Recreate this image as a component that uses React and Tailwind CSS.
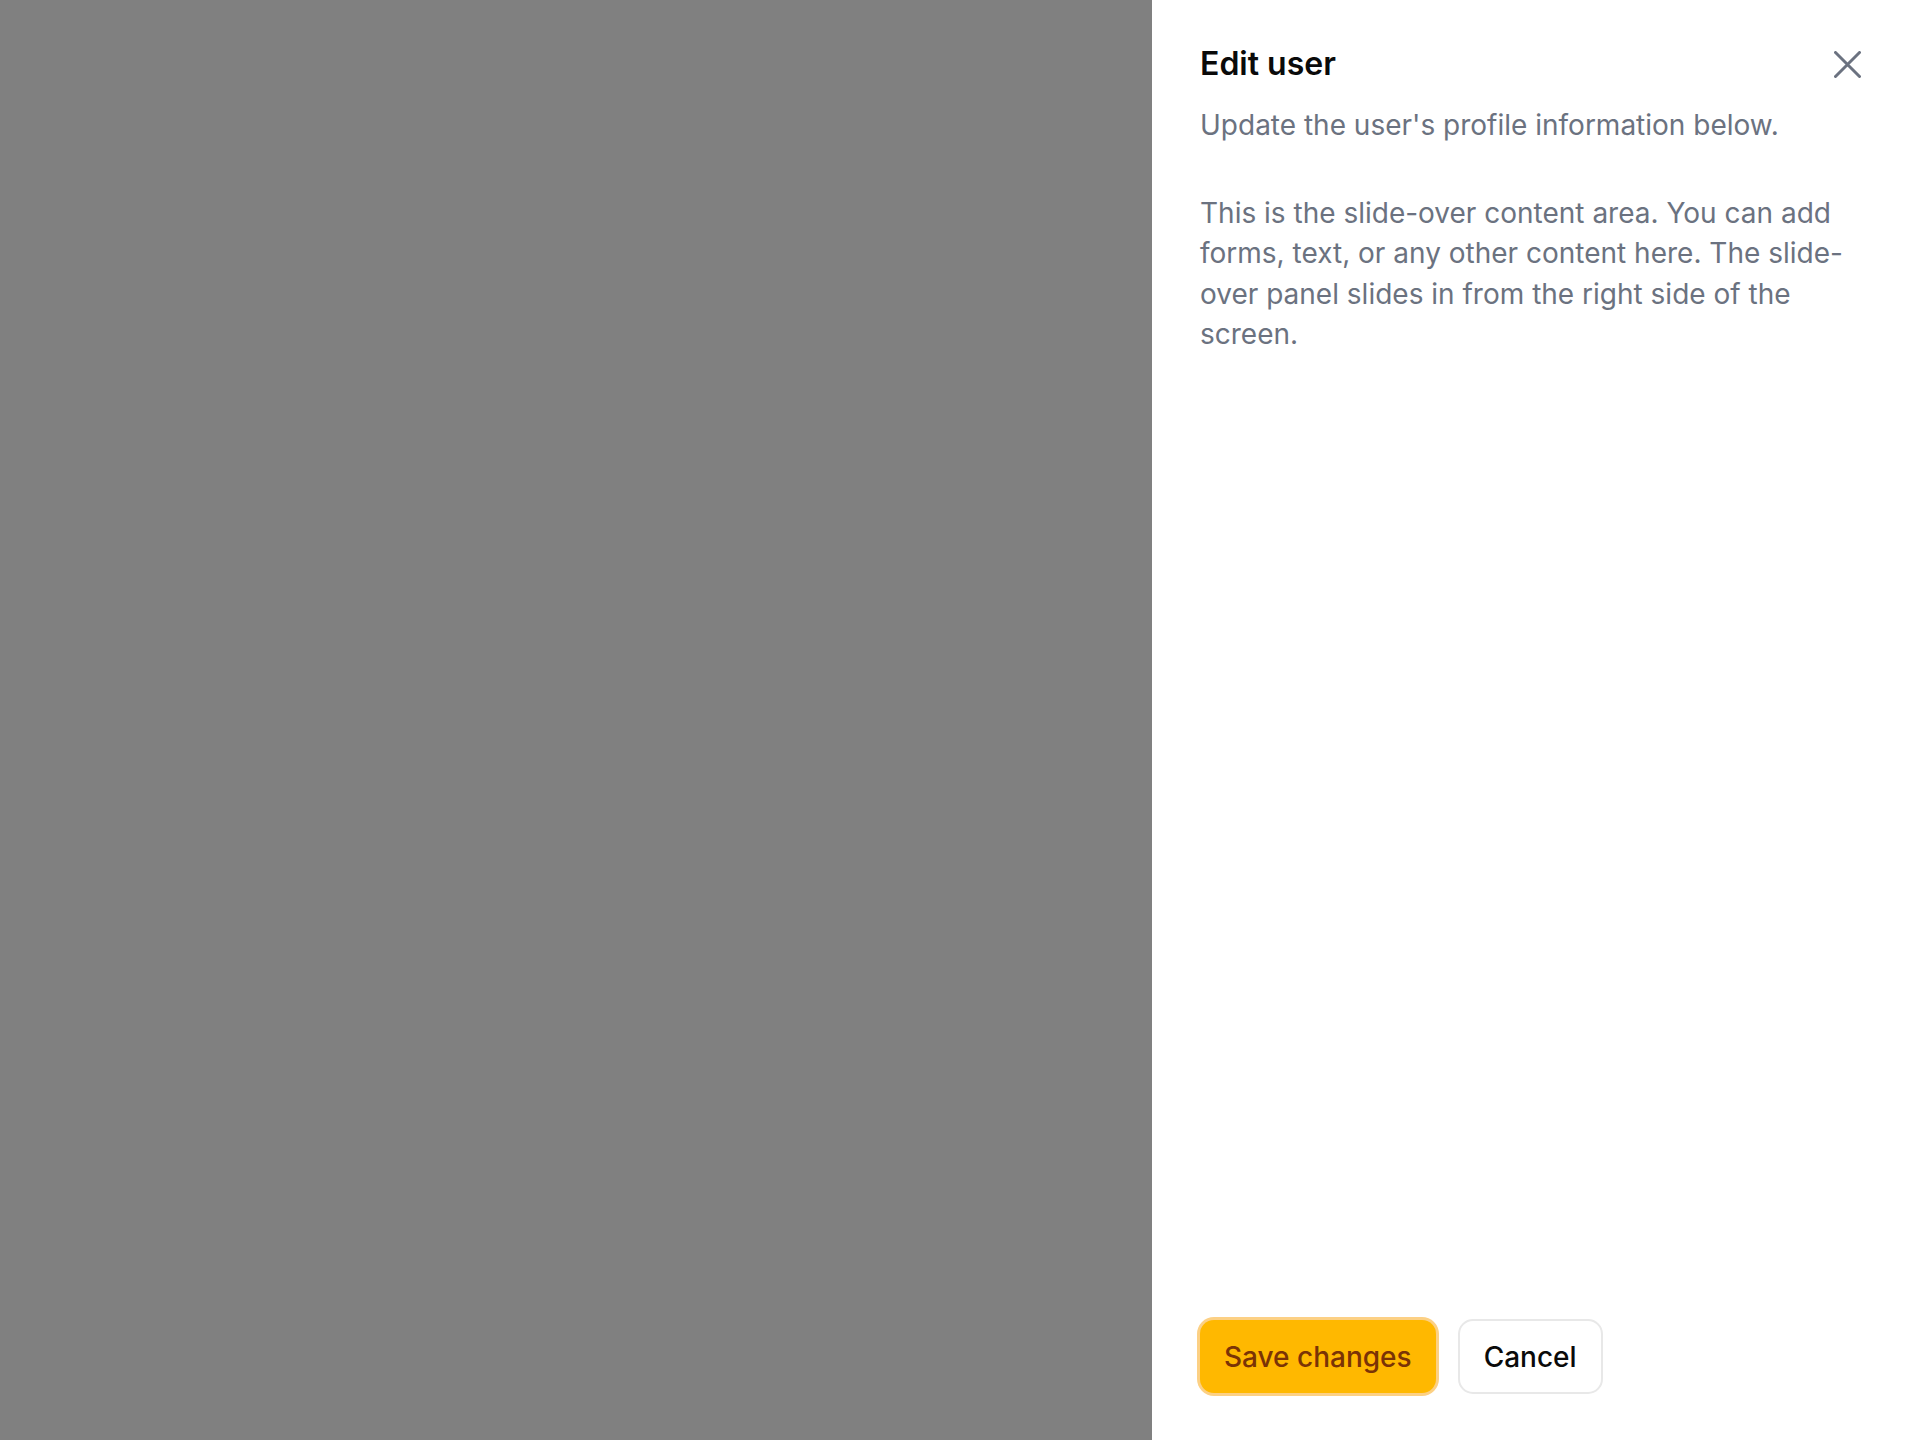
import React from "react";

export default function App() {
  return (
    <div className="flex w-full h-[1440px] font-['Inter','Noto_Sans',sans-serif]">
      <div className="flex-1 bg-[#808080]" />
      <div className="w-[768px] bg-white flex flex-col px-[48px] pt-[43px] pb-[46px]">
        <div className="flex items-center justify-between">
          <h2 className="text-[32px] leading-[42px] font-semibold text-[#0a0a0a]">Edit user</h2>
          <button className="mr-[11px] flex items-center justify-center">
            <svg width="27" height="27" viewBox="0 0 27 27" fill="none" stroke="#6b7280" strokeWidth="3" strokeLinecap="round">
              <path d="M1.5 1.5 25.5 25.5M25.5 1.5 1.5 25.5" />
            </svg>
          </button>
        </div>
        <p className="mt-[20px] text-[28px] leading-[40.5px] text-[#6b7280]">
          Update the user's profile information below.
        </p>
        <p className="mt-[47px] text-[28px] leading-[40.5px] text-[#6b7280]">
          This is the slide-over content area. You can add forms, text, or any other content here. The slide-over panel slides in from the right side of the screen.
        </p>
        <div className="flex-1" />
        <div className="flex items-center gap-[22px]">
          <button className="h-[73px] px-[24px] rounded-[14px] bg-[#ffb800] ring-[3px] ring-[#fcd084] text-[28px] font-medium text-[#7a3306]">
            Save changes
          </button>
          <button className="h-[75px] px-[24px] rounded-[15px] bg-white border-2 border-[#e8e8e8] text-[28px] font-medium text-[#0a0a0a]">
            Cancel
          </button>
        </div>
      </div>
    </div>
  );
}
